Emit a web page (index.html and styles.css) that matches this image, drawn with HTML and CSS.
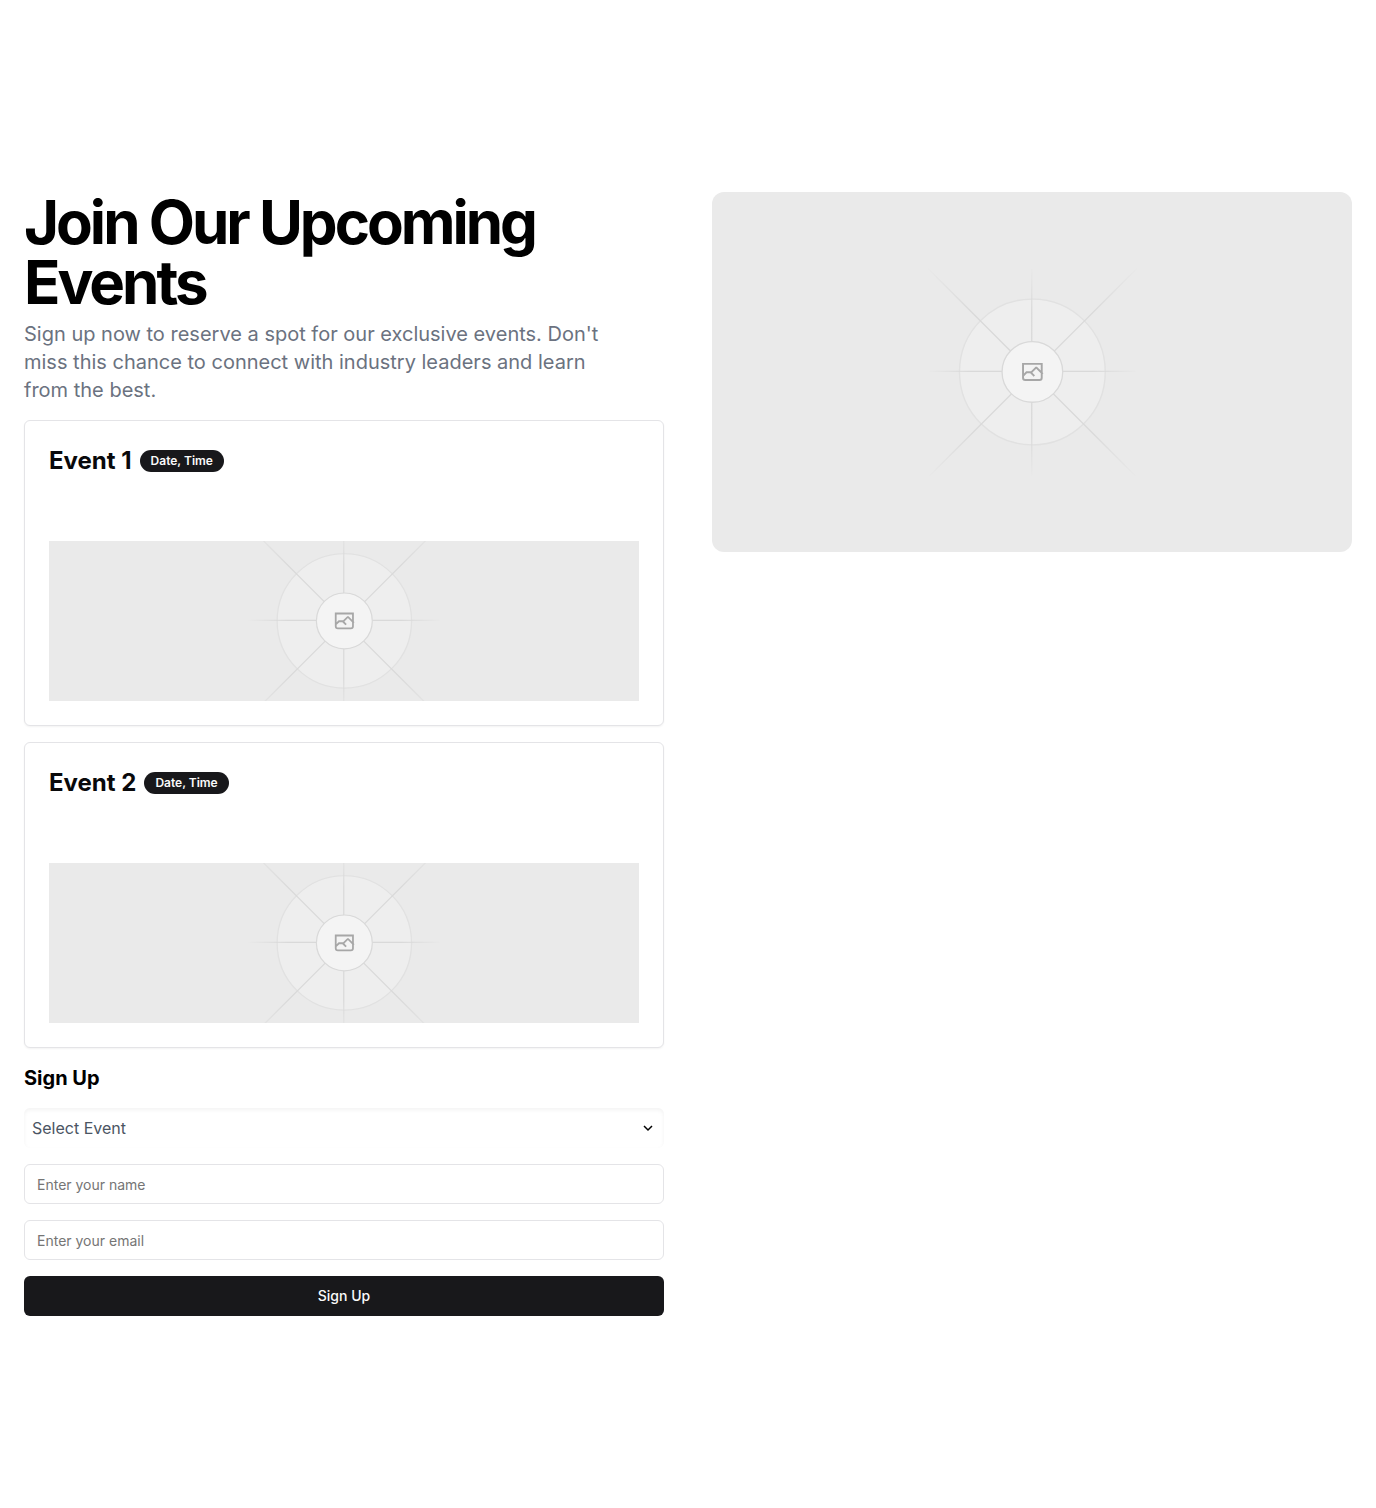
FILE: index.html
```html
<!DOCTYPE html>
<html lang="en">
<head>
<meta charset="utf-8">
<meta name="viewport" content="width=device-width, initial-scale=1">
<title>Join Our Upcoming Events</title>
<link rel="stylesheet" href="styles.css">
</head>
<body>
<svg class="sprite" width="0" height="0" aria-hidden="true">
  <defs>
    <linearGradient id="ray-a" x1="554.061" x2="-.48" y1=".083" y2=".087" gradientUnits="userSpaceOnUse"><stop stop-color="#C9C9C9" stop-opacity="0"/><stop offset=".208" stop-color="#C9C9C9"/><stop offset=".792" stop-color="#C9C9C9"/><stop offset="1" stop-color="#C9C9C9" stop-opacity="0"/></linearGradient>
    <linearGradient id="ray-b" x1="796.912" x2="404.507" y1="599.963" y2="599.965" gradientUnits="userSpaceOnUse"><stop stop-color="#C9C9C9" stop-opacity="0"/><stop offset=".208" stop-color="#C9C9C9"/><stop offset=".792" stop-color="#C9C9C9"/><stop offset="1" stop-color="#C9C9C9" stop-opacity="0"/></linearGradient>
    <linearGradient id="ray-c" x1="600.792" x2="600.794" y1="403.677" y2="796.082" gradientUnits="userSpaceOnUse"><stop stop-color="#C9C9C9" stop-opacity="0"/><stop offset=".208" stop-color="#C9C9C9"/><stop offset=".792" stop-color="#C9C9C9"/><stop offset="1" stop-color="#C9C9C9" stop-opacity="0"/></linearGradient>
    <linearGradient id="ray-d" x1="404.85" x2="796.972" y1="403.903" y2="796.02" gradientUnits="userSpaceOnUse"><stop stop-color="#C9C9C9" stop-opacity="0"/><stop offset=".208" stop-color="#C9C9C9"/><stop offset=".792" stop-color="#C9C9C9"/><stop offset="1" stop-color="#C9C9C9" stop-opacity="0"/></linearGradient>
    <g id="placeholder" fill="none" stroke-width="2.418">
      <g opacity=".5">
        <circle cx="600.709" cy="599.88" r="136.621" fill="#FAFAFA" stroke="#C9C9C9" opacity=".5"/>
        <path stroke="url(#ray-a)" d="M0-1.209h553.581" transform="scale(1 -1) rotate(45 1163.11 91.165)"/>
        <path stroke="url(#ray-b)" d="M404.846 598.671h391.726"/>
        <path stroke="url(#ray-c)" d="M599.5 795.742V404.017"/>
        <path stroke="url(#ray-d)" d="m795.717 796.597-391.441-391.44"/>
        <circle cx="600.709" cy="599.88" r="56.825" fill="#fff" stroke="#C9C9C9"/>
        <path fill="#666" fill-rule="evenodd" d="M616.426 586.58h-31.434v16.176l3.553-3.554.531-.531h9.068l.074-.074 8.463-8.463h2.565l7.18 7.181V586.58Zm-15.715 14.654 3.698 3.699 1.283 1.282-2.565 2.565-1.282-1.283-5.2-5.199h-6.066l-5.514 5.514-.073.073v2.876a2.418 2.418 0 0 0 2.418 2.418h26.598a2.418 2.418 0 0 0 2.418-2.418v-8.317l-8.463-8.463-7.181 7.181-.071.072Zm-19.347 5.442v4.085a6.045 6.045 0 0 0 6.046 6.045h26.598a6.044 6.044 0 0 0 6.045-6.045v-7.108l1.356-1.355-1.282-1.283-.074-.073v-17.989h-38.689v23.43l-.146.146.146.147Z"/>
      </g>
    </g>
  </defs>
</svg>
<main class="events">
  <div class="column">
    <header class="intro">
      <h1 class="title">Join Our Upcoming Events</h1>
      <p class="lead">Sign up now to reserve a spot for our exclusive events. Don't miss this chance to connect with industry leaders and learn from the best.</p>
    </header>
    <article class="card">
      <div class="card-header">
        <h2 class="card-title">Event 1</h2>
        <span class="badge">Date, Time</span>
      </div>
      <svg class="card-image" viewBox="0 0 1200 1200" preserveAspectRatio="xMidYMid slice" role="img" aria-label="Event 1"><use href="#placeholder"/></svg>
    </article>
    <article class="card">
      <div class="card-header">
        <h2 class="card-title">Event 2</h2>
        <span class="badge">Date, Time</span>
      </div>
      <svg class="card-image" viewBox="0 0 1200 1200" preserveAspectRatio="xMidYMid slice" role="img" aria-label="Event 2"><use href="#placeholder"/></svg>
    </article>
    <h2 class="form-title">Sign Up</h2>
    <form class="form">
      <div class="select-field">
        <select class="select" aria-label="Select Event">
          <option>Select Event</option>
          <option>Event 1</option>
          <option>Event 2</option>
        </select>
        <svg class="chevron" viewBox="0 0 16 16" aria-hidden="true"><path d="m4 6 4 4 4-4"/></svg>
      </div>
      <input class="input" type="text" placeholder="Enter your name" aria-label="Name">
      <input class="input" type="email" placeholder="Enter your email" aria-label="Email">
      <button class="button" type="submit">Sign Up</button>
    </form>
  </div>
  <svg class="hero-image" viewBox="0 0 1200 1200" preserveAspectRatio="xMidYMid slice" role="img" aria-label="Events"><use href="#placeholder"/></svg>
</main>
</body>
</html>
```
FILE: styles.css
```css
*, *::before, *::after {
  box-sizing: border-box;
}

body {
  margin: 0;
  background: #fff;
  color: #000;
  font-family: Inter, "Liberation Sans", sans-serif;
  font-size: 16px;
  line-height: 24px;
}

h1, h2, p {
  margin: 0;
}

.sprite {
  position: absolute;
}

.events {
  display: grid;
  grid-template-columns: repeat(2, minmax(0, 1fr));
  align-items: start;
  gap: 48px;
  padding: 192px 24px;
}

.column,
.form {
  display: flex;
  flex-direction: column;
  gap: 16px;
}

.intro {
  display: flex;
  flex-direction: column;
  gap: 8px;
}

.title {
  font-size: 60px;
  line-height: 60px;
  font-weight: 700;
  letter-spacing: -3px;
}

.lead {
  max-width: 600px;
  color: #6b7280;
  font-size: 20px;
  line-height: 28px;
}

.card {
  display: flex;
  flex-direction: column;
  gap: 64px;
  padding: 24px;
  border: 1px solid #e4e4e7;
  border-radius: 6px;
  background: #fff;
  color: #09090b;
  box-shadow: 0 1px 2px rgb(0 0 0 / 5%);
}

.card-header {
  display: flex;
  align-items: center;
  gap: 8px;
}

.card-title {
  font-size: 24px;
  line-height: 32px;
  font-weight: 700;
}

.badge {
  padding: 3px 11px;
  border-radius: 999px;
  background: #18181b;
  color: #fafafa;
  font-size: 12px;
  line-height: 16px;
  font-weight: 600;
}

.card-image {
  display: block;
  width: 100%;
  height: 160px;
  background: #eaeaea;
}

.hero-image {
  display: block;
  width: 100%;
  aspect-ratio: 16 / 9;
  border-radius: 12px;
  background: #eaeaea;
}

.form-title {
  font-size: 20px;
  line-height: 28px;
  font-weight: 700;
}

.select-field {
  position: relative;
}

.select {
  display: block;
  appearance: none;
  width: 100%;
  height: 40px;
  padding: 8px 32px 8px 8px;
  border: 0;
  border-radius: 6px;
  background-color: #fff;
  color: #4b5563;
  font: inherit;
  box-shadow: inset 0 2px 4px rgb(0 0 0 / 5%);
}

.chevron {
  position: absolute;
  top: 12px;
  right: 8px;
  width: 16px;
  height: 16px;
  fill: none;
  stroke: #000;
  stroke-width: 1.5;
  pointer-events: none;
}

.input {
  width: 100%;
  height: 40px;
  padding: 8px 12px;
  border: 1px solid #e4e4e7;
  border-radius: 6px;
  background: #fff;
  color: #09090b;
  font: inherit;
  font-size: 14px;
  line-height: 20px;
}

.input::placeholder {
  color: #757575;
}

.button {
  width: 100%;
  height: 40px;
  padding: 8px 16px;
  border: 0;
  border-radius: 6px;
  background: #18181b;
  color: #fafafa;
  font: inherit;
  font-size: 14px;
  line-height: 20px;
  font-weight: 500;
  cursor: pointer;
}

@media (max-width: 1023px) {
  .events {
    grid-template-columns: minmax(0, 1fr);
    padding-block: 96px;
  }
}
```
